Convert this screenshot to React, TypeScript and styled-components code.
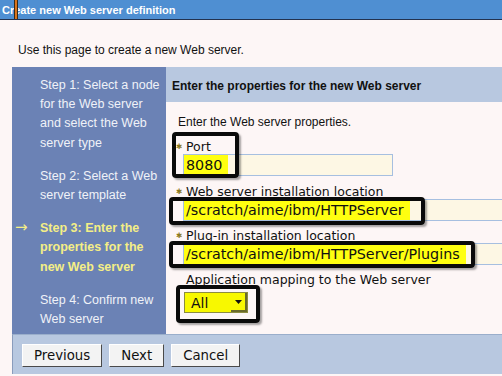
import React from "react";
import styled, { createGlobalStyle } from "styled-components";

const Global = createGlobalStyle`
  html, body { margin: 0; padding: 0; overflow: hidden; }
  body { background: #fdf6f6; font-family: "Liberation Sans", Arial, sans-serif; }
`;

const TitleBar = styled.div`
  position: relative;
  height: 19px;
  background: #4f8fd2;
  border-bottom: 1px solid #23324f;
  display: flex;
  align-items: center;
  padding-left: 2px;
  color: #ffffff;
  font: bold 11px "Liberation Sans", Arial, sans-serif;
`;

const Cursor = styled.span`
  position: absolute;
  left: 14px;
  top: 0;
  width: 2px;
  height: 19px;
  background: #d9741c;
  border-left: 1px solid #3a2a1a;
  border-right: 1px solid #3a2a1a;
`;

const Intro = styled.div`
  padding: 23px 0 10px 18px;
  font-size: 12px;
  line-height: 14px;
  color: #111;
`;

const Wizard = styled.div`
  margin-left: 12px;
  display: grid;
  grid-template-columns: 154px 1fr;
  grid-template-rows: 267px 40px;
`;

const Nav = styled.div`
  background: #6b82b5;
  padding: 8.5px 4px 0 2px;
  display: flex;
  flex-direction: column;
  gap: 13.5px;
`;

const Step = styled.div<{ $current?: boolean }>`
  display: grid;
  grid-template-columns: 26px 1fr;
  font-size: 12.5px;
  line-height: 19.4px;
  color: ${(p) => (p.$current ? "#f4ee86" : "#f0f2f8")};
  font-weight: ${(p) => (p.$current ? "bold" : "normal")};
`;

const Arrow = styled.span`
  color: #f4ee86;
  font: 15px "DejaVu Sans", sans-serif;
  line-height: 16px;
  padding-left: 1px;
`;

const Main = styled.div`
  display: flex;
  flex-direction: column;
  overflow: hidden;
`;

const Header = styled.div`
  height: 35px;
  background: #b8c8e0;
  display: flex;
  align-items: center;
  padding: 2px 0 0 6px;
  box-sizing: border-box;
  font-weight: bold;
  font-size: 12px;
  color: #111;
  white-space: nowrap;
`;

const Body = styled.div`
  position: relative;
  flex: 1;
  padding: 13px 0 0 9px;
  display: flex;
  flex-direction: column;
`;

const Lead = styled.div`
  margin-left: 3px;
  font-size: 12px;
  line-height: 14px;
  color: #111;
  margin-bottom: 2px;
`;

const Field = styled.div<{ $gap?: number }>`
  margin-top: ${(p) => p.$gap ?? 8}px;
  display: flex;
  flex-direction: column;
  align-items: flex-start;
`;

const Label = styled.div`
  display: grid;
  grid-template-columns: 11px auto;
  align-items: center;
  font: 12.5px "DejaVu Sans", sans-serif;
  line-height: 15px;
  color: #111;
  white-space: nowrap;
`;

const Req = styled.span`
  color: #8c7a1e;
  font-size: 7.5px;
  padding-left: 1px;
  line-height: 15px;
`;

const TextBox = styled.div<{ $w: number }>`
  margin-left: 8px;
  width: ${(p) => p.$w}px;
  height: 22px;
  box-sizing: border-box;
  background: #fdf7e4;
  border: 1px solid #a6bfe0;
  display: flex;
  align-items: center;
  font: 14.3px "DejaVu Sans", sans-serif;
  color: #111;
  white-space: nowrap;
`;

const Hl = styled.span`
  background: #ffff10;
  padding: 2px 6px 2px 2px;
  line-height: 16px;
`;

const Select = styled.div`
  margin: 5px 0 0 9px;
  width: 64px;
  height: 21px;
  box-sizing: border-box;
  background: #f8f800;
  border: 1px solid #8c8c40;
  display: flex;
  align-items: center;
  justify-content: space-between;
  font: 14px "DejaVu Sans", sans-serif;
  color: #111;
  padding-left: 6px;
`;

const DropBtn = styled.span`
  width: 16px;
  height: 19px;
  box-sizing: border-box;
  border-right: 2px solid #6a6a2a;
  border-bottom: 2px solid #6a6a2a;
  display: flex;
  align-items: center;
  justify-content: center;
`;

const Callout = styled.div<{ $l: number; $t: number; $w: number; $h: number }>`
  position: absolute;
  left: ${(p) => p.$l}px;
  top: ${(p) => p.$t}px;
  width: ${(p) => p.$w}px;
  height: ${(p) => p.$h}px;
  box-sizing: border-box;
  border: 4px solid #0a0a0a;
  border-radius: 4px;
  box-shadow: 2px 2px 2px rgba(0, 0, 0, 0.35);
  pointer-events: none;
`;

const ButtonBar = styled.div`
  grid-column: 1 / -1;
  background: #b8c8e0;
  border-top: 1px solid #9aaecb;
  border-left: 1px solid #8a9cbc;
  display: flex;
  align-items: center;
  gap: 7px;
  padding: 1px 0 0 9px;
`;

const Button = styled.button`
  height: 23px;
  padding: 0 11px;
  background: #f3f3f3;
  border: 1px solid #ffffff;
  border-right-color: #4a4a4a;
  border-bottom-color: #4a4a4a;
  font: 13.3px "DejaVu Sans", sans-serif;
  color: #111;
`;

const steps = [
  { text: "Step 1: Select a node for the Web server and select the Web server type" },
  { text: "Step 2: Select a Web server template" },
  { text: "Step 3: Enter the properties for the new Web server", current: true },
  { text: "Step 4: Confirm new Web server" },
];

export default function App() {
  return (
    <>
      <Global />
      <TitleBar>
        Create new Web server definition
        <Cursor />
      </TitleBar>
      <Intro>Use this page to create a new Web server.</Intro>
      <Wizard>
        <Nav>
          {steps.map((s) => (
            <Step key={s.text} $current={s.current}>
              <Arrow>{s.current ? "→" : ""}</Arrow>
              <span>{s.text}</span>
            </Step>
          ))}
        </Nav>
        <Main>
          <Header>Enter the properties for the new Web server</Header>
          <Body>
            <Lead>Enter the Web server properties.</Lead>
            <Field>
              <Label>
                <Req>✱</Req>
                <span>Port</span>
              </Label>
              <TextBox $w={210}>
                <Hl>8080</Hl>
              </TextBox>
            </Field>
            <Field>
              <Label>
                <Req>✱</Req>
                <span>Web server installation location</span>
              </Label>
              <TextBox $w={340}>
                <Hl>/scratch/aime/ibm/HTTPServer</Hl>
              </TextBox>
            </Field>
            <Field $gap={7}>
              <Label>
                <Req>✱</Req>
                <span>Plug-in installation location</span>
              </Label>
              <TextBox $w={340}>
                <Hl>/scratch/aime/ibm/HTTPServer/Plugins</Hl>
              </TextBox>
            </Field>
            <Field $gap={7}>
              <Label>
                <span />
                <span>Application mapping to the Web server</span>
              </Label>
              <Select>
                All
                <DropBtn>
                  <svg width="7" height="4" viewBox="0 0 7 4">
                    <path d="M0 0h7L3.5 4z" fill="#111" />
                  </svg>
                </DropBtn>
              </Select>
            </Field>
            <Callout $l={6} $t={30} $w={67} $h={46} />
            <Callout $l={3} $t={95} $w={256} $h={28} />
            <Callout $l={3} $t={139} $w={306} $h={27} />
            <Callout $l={10} $t={183} $w={84} $h={38} />
          </Body>
        </Main>
        <ButtonBar>
          <Button>Previous</Button>
          <Button>Next</Button>
          <Button>Cancel</Button>
        </ButtonBar>
      </Wizard>
    </>
  );
}
